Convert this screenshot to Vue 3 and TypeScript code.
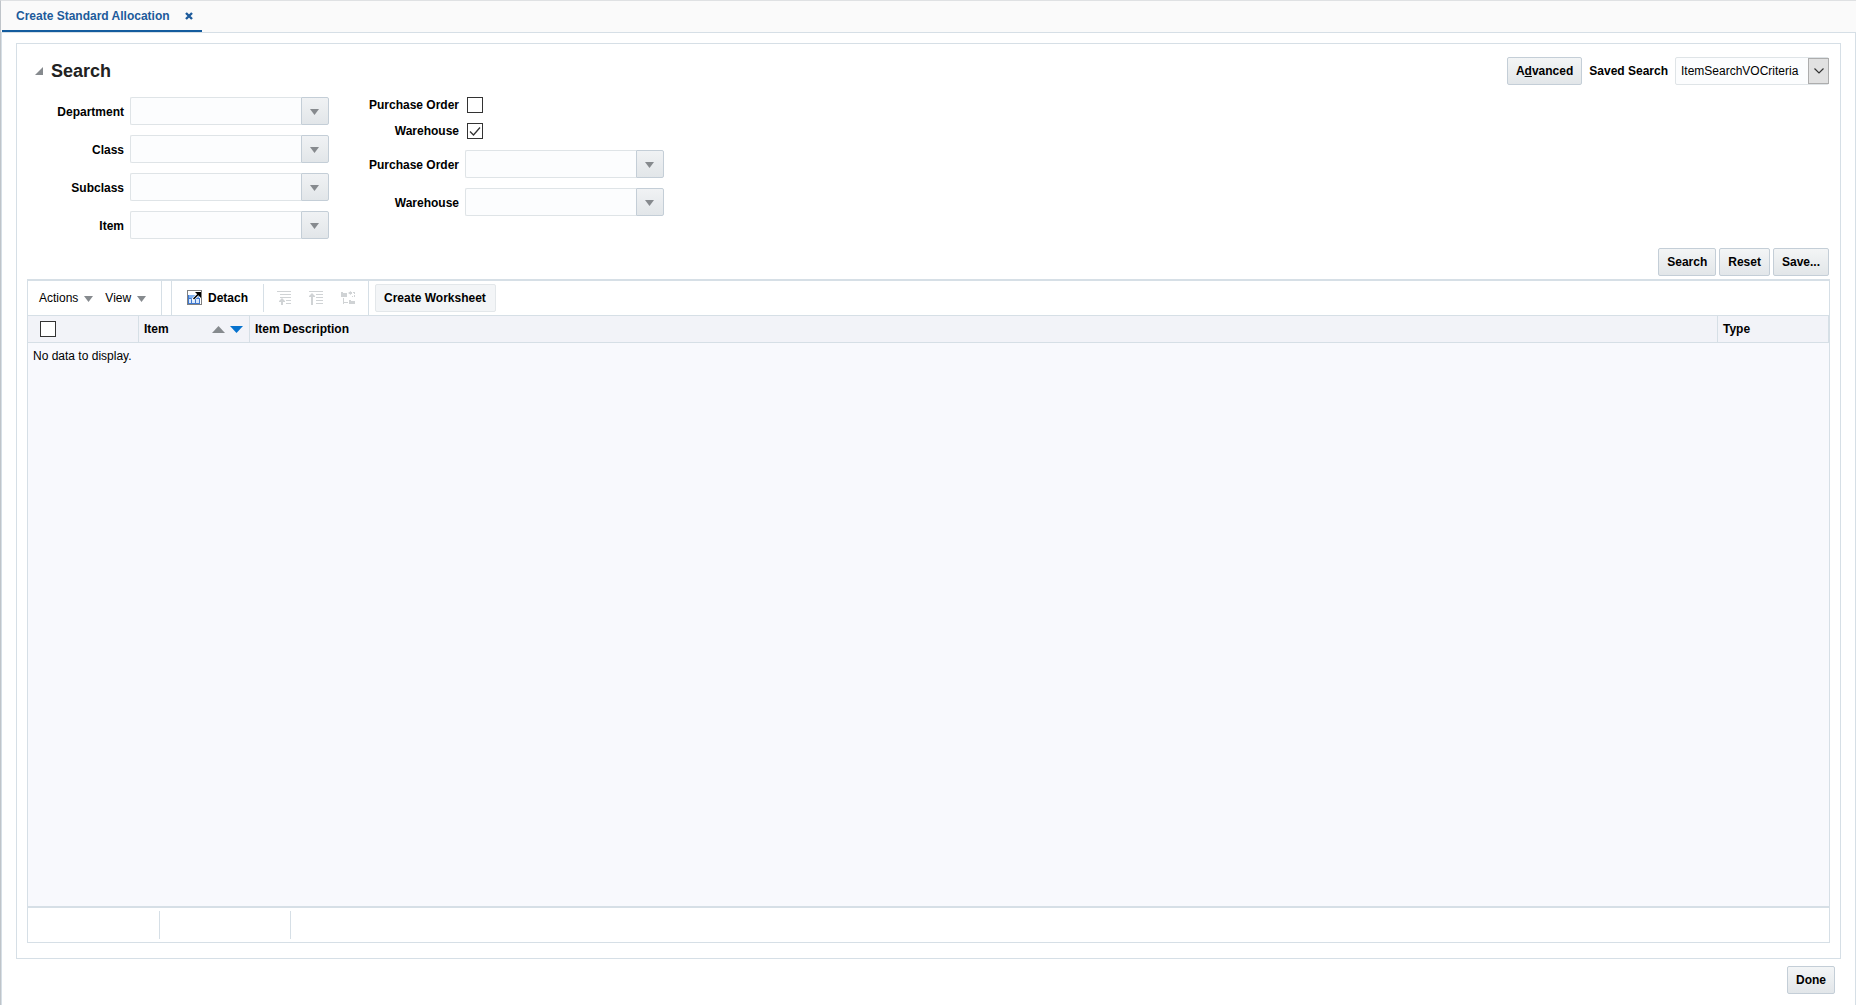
<script setup lang="ts">
import { ref } from 'vue'

interface Field {
  id: string
  label: string
}

const leftFields: Field[] = [
  { id: 'department', label: 'Department' },
  { id: 'class', label: 'Class' },
  { id: 'subclass', label: 'Subclass' },
  { id: 'item', label: 'Item' },
]
const rightFields: Field[] = [
  { id: 'po', label: 'Purchase Order' },
  { id: 'wh', label: 'Warehouse' },
]
const values = ref<Record<string, string>>({})
const usePurchaseOrder = ref(false)
const useWarehouse = ref(true)
const allSelected = ref(false)
const savedSearch = ref('ItemSearchVOCriteria')
</script>

<template>
  <div class="page">
    <nav class="tabs">
      <div class="tab">
        <a href="#" class="tab-link">Create Standard Allocation</a>
        <button type="button" class="tab-close" aria-label="Close tab">
          <svg width="8" height="8" viewBox="0 0 8 8"><path d="M1 1L7 7M7 1L1 7" stroke="#1d5b9b" stroke-width="2.4" /></svg>
        </button>
      </div>
    </nav>

    <main class="content">
      <section class="panel">
        <header class="panel-head">
          <button type="button" class="disclose" aria-label="Collapse search">
            <svg width="8" height="8" viewBox="0 0 8 8"><path d="M8 0V8H0Z" fill="#868a8e" /></svg>
          </button>
          <h1>Search</h1>
          <button type="button" class="btn">A<u>d</u>vanced</button>
          <label class="saved-label" for="saved">Saved Search</label>
          <div class="select-wrap">
            <select id="saved" v-model="savedSearch">
              <option>ItemSearchVOCriteria</option>
            </select>
            <span class="select-arrow">
              <svg width="10" height="6" viewBox="0 0 10 6"><path d="M.5 .5L5 5L9.500 .5" fill="none" stroke="#333" stroke-width="1.200" /></svg>
            </span>
          </div>
        </header>

        <form class="criteria" @submit.prevent>
          <div class="col col-left">
            <div v-for="f in leftFields" :key="f.id" class="field">
              <label :for="f.id">{{ f.label }}</label>
              <div class="combo">
                <input :id="f.id" v-model="values[f.id]" type="text" />
                <button type="button" :aria-label="'Search ' + f.label">
                  <svg width="9" height="6" viewBox="0 0 9 6"><path d="M0 0H9L4.500 6Z" fill="#868a8e" /></svg>
                </button>
              </div>
            </div>
          </div>
          <div class="col col-right">
            <div class="check-row">
              <label for="use-po">Purchase Order</label>
              <input id="use-po" v-model="usePurchaseOrder" type="checkbox" class="check" />
            </div>
            <div class="check-row">
              <label for="use-wh">Warehouse</label>
              <span class="check-wrap">
                <input id="use-wh" v-model="useWarehouse" type="checkbox" class="check" />
                <svg v-if="useWarehouse" class="tick" width="16" height="16" viewBox="0 0 16 16"><path d="M3 8.500L6.500 12L13 4.500" fill="none" stroke="#333" stroke-width="1.300" /></svg>
              </span>
            </div>
            <div v-for="f in rightFields" :key="f.id" class="field">
              <label :for="f.id">{{ f.label }}</label>
              <div class="combo">
                <input :id="f.id" v-model="values[f.id]" type="text" />
                <button type="button" :aria-label="'Search ' + f.label">
                  <svg width="9" height="6" viewBox="0 0 9 6"><path d="M0 0H9L4.500 6Z" fill="#868a8e" /></svg>
                </button>
              </div>
            </div>
          </div>
        </form>

        <div class="search-actions">
          <button type="button" class="btn">Search</button>
          <button type="button" class="btn">Reset</button>
          <button type="button" class="btn">Save...</button>
        </div>

        <div class="grid">
          <div class="toolbar">
            <div class="menus">
              <button type="button" class="menu">Actions
                <svg width="9" height="6" viewBox="0 0 9 6"><path d="M0 0H9L4.500 6Z" fill="#868a8e" /></svg>
              </button>
              <button type="button" class="menu">View
                <svg width="9" height="6" viewBox="0 0 9 6"><path d="M0 0H9L4.500 6Z" fill="#868a8e" /></svg>
              </button>
            </div>
            <button type="button" class="detach">
              <svg width="16" height="16" viewBox="0 0 16 16">
                <rect x=".5" y=".5" width="14" height="14" fill="none" stroke="#000" stroke-dasharray="1 1" />
                <path d="M1 5H12V14H1Z" fill="#d9e8fb" />
                <path d="M1 5H12V8H1Z" fill="#7fb0f0" />
                <path d="M1.500 5V14M4.500 8V14M8.500 8V14M12.500 8V14M1 8.500H13M1 13.500H13" fill="none" stroke="#3f78cf" />
                <path d="M5.500 10L12 3.500" stroke="#fff" stroke-width="3" />
                <path d="M6.500 9L12 3.500" stroke="#000" stroke-width="1.600" />
                <path d="M8 2H14V8L12 6L10 4Z" fill="#000" />
              </svg>
              Detach
            </button>
            <div class="tree-tools">
              <button type="button" disabled aria-label="Go up">
                <svg width="14" height="14" viewBox="0 0 14 14" fill="#d0d3d5">
                  <path d="M0 0H14V1H0ZM3 3H14V4H3ZM3 6H14V7H3ZM9 9H14V10H9ZM9 12H14V13H9ZM4 14V11H2V10L5 7L8 10V11H6V14Z" />
                </svg>
              </button>
              <button type="button" disabled aria-label="Go to top">
                <svg width="14" height="14" viewBox="0 0 14 14" fill="#d0d3d5">
                  <path d="M0 0H14V1H0ZM7 3H14V4H7ZM7 6H14V7H7ZM7 9H14V10H7ZM7 12H14V13H7ZM2 14V6H0V5L3 2L6 5V6H4V14Z" />
                </svg>
              </button>
              <button type="button" disabled aria-label="Show as top">
                <svg width="14" height="14" viewBox="0 0 14 14" fill="#d0d3d5">
                  <path d="M0 1H2V2H6V6H0ZM8 9H10V10H14V13H8ZM2 7H3V11H7V12H3V13H2ZM7 2L10 0V1H11V3H10V4ZM12 1H14V3H13V2H12ZM13 4H14V6H13ZM11 5H12V6H11Z" />
                </svg>
              </button>
            </div>
            <button type="button" class="create">Create Worksheet</button>
          </div>

          <div class="body">
            <table>
              <colgroup><col class="c-fixed" /><col class="c-fixed" /><col /><col class="c-fixed" /></colgroup>
              <thead>
                <tr>
                  <th><input v-model="allSelected" type="checkbox" class="check head-check" aria-label="Select all" /></th>
                  <th>
                    <div class="sortable">
                      <span>Item</span>
                      <button type="button" aria-label="Sort ascending"><svg width="13" height="7" viewBox="0 0 13 7"><path d="M0 7L6.500 0L13 7Z" fill="#868a8e" /></svg></button>
                      <button type="button" aria-label="Sort descending"><svg width="13" height="7" viewBox="0 0 13 7"><path d="M0 0H13L6.500 7Z" fill="#0572ce" /></svg></button>
                    </div>
                  </th>
                  <th>Item Description</th>
                  <th>Type</th>
                </tr>
              </thead>
              <tbody>
                <tr><td colspan="4">No data to display.</td></tr>
              </tbody>
            </table>
          </div>
          <div class="status"><span></span><span></span></div>
        </div>
      </section>
      <footer class="page-foot">
        <button type="button" class="btn">Done</button>
      </footer>
    </main>
  </div>
</template>

<style>
body {
  margin: 0;
  background: #fff;
}
</style>

<style scoped>
* {
  box-sizing: border-box;
}
.page {
  display: flex;
  flex-direction: column;
  min-height: 100vh;
  border-left: 1px solid #bfc4c9;
  border-top: 1px solid #dfe1e3;
  font: 12px/16px "Liberation Sans", Arial, sans-serif;
  color: #000;
}
button,
input,
select {
  font: inherit;
  color: inherit;
  margin: 0;
}
button {
  padding: 0;
  border: 0;
  background: none;
}
svg {
  display: block;
  flex: none;
}
.tabs {
  display: flex;
  height: 31px;
  padding-left: 1px;
  background: #fafafa;
}
.tab {
  display: flex;
  align-items: center;
  gap: 15px;
  padding: 0 9px 0 14px;
  border-bottom: 2px solid #145c9e;
}
.tab-link {
  font-weight: bold;
  color: #1d5b9b;
  text-decoration: none;
}
.content {
  flex: 1;
  display: flex;
  flex-direction: column;
  padding: 10px 14px 11px;
  border: 1px solid #d6dfe6;
  border-bottom: 0;
}
.panel {
  flex: 1;
  display: flex;
  flex-direction: column;
  padding: 13px 10px 15px;
  border: 1px solid #d6dfe6;
}
.panel-head {
  display: flex;
  align-items: center;
  height: 28px;
  padding-left: 8px;
}
.panel-head h1 {
  flex: 1;
  margin: 0 0 0 8px;
  font-size: 18px;
  line-height: 24px;
  color: #222;
}
.btn {
  height: 28px;
  padding: 0 8px;
  border: 1px solid #c4ced7;
  border-radius: 2px;
  background: linear-gradient(#f3f5f6, #e2e6e9);
  font-weight: bold;
}
.saved-label {
  margin: 0 7px;
  font-weight: bold;
}
.select-wrap {
  position: relative;
}
.select-wrap select {
  display: block;
  width: 154px;
  height: 28px;
  padding: 0 24px 0 5px;
  border: 1px solid #dfe4e7;
  border-radius: 2px;
  background: #fcfdfe;
  appearance: none;
}
.select-arrow {
  position: absolute;
  top: 1px;
  right: 0;
  display: flex;
  align-items: center;
  justify-content: center;
  width: 21px;
  height: 26px;
  border: 1px solid #adadad;
  background: #e1e1e1;
  pointer-events: none;
}
.panel-head,
.search-actions {
  padding-right: 1px;
}
.criteria {
  display: flex;
  padding-top: 12px;
}
.col {
  display: flex;
  flex-direction: column;
  gap: 10px;
}
.col label {
  padding-right: 6px;
  font-weight: bold;
  text-align: right;
}
.col .field label {
  padding-top: 1px;
}
.col-left label {
  width: 103px;
}
.col-right label {
  width: 136px;
}
.field,
.check-row {
  display: flex;
  align-items: center;
}
.check-row {
  gap: 2px;
  height: 16px;
}
.check-row + .field {
  margin-top: 1px;
}
.combo {
  display: flex;
  height: 28px;
}
.combo input {
  width: 171px;
  padding: 0 5px;
  border: 1px solid #dfe4e7;
  border-right: 0;
  border-radius: 2px 0 0 2px;
  background: #fcfdfe;
}
.combo button {
  display: flex;
  align-items: center;
  width: 28px;
  padding: 2px 0 0 8px;
  border: 1px solid #c4ced7;
  border-radius: 0 2px 2px 0;
  background: linear-gradient(#f0f2f4, #e2e6e9);
}
.check {
  display: block;
  width: 16px;
  height: 16px;
  border: 1px solid #333;
  background: #fff;
  appearance: none;
}
.check-wrap {
  position: relative;
}
.tick {
  position: absolute;
  inset: 0;
  pointer-events: none;
}
.search-actions {
  display: flex;
  justify-content: flex-end;
  gap: 3px;
  padding-top: 9px;
  padding-bottom: 3px;
}
.grid {
  flex: 1;
  display: flex;
  flex-direction: column;
  border: 1px solid #d6dfe6;
  border-top-width: 2px;
}
.toolbar {
  display: flex;
  align-items: center;
  height: 35px;
  border-bottom: 1px solid #d6dfe6;
}
.menus {
  display: flex;
  align-self: stretch;
  gap: 12px;
  width: 134px;
  padding-left: 11px;
  border-right: 1px solid #d6dfe6;
}
.menu {
  display: flex;
  align-items: center;
  gap: 6px;
}
.menu svg {
  margin-top: 2px;
}
.detach {
  display: flex;
  align-self: stretch;
  align-items: center;
  gap: 5px;
  margin-left: 9px;
  padding: 0 15px;
  border-left: 1px solid #d6dfe6;
  font-weight: bold;
}
.tree-tools {
  display: flex;
  align-self: stretch;
  align-items: center;
  gap: 18px;
  padding: 0 13px;
  border-right: 1px solid #d6dfe6;
}
.tree-tools::before {
  content: "";
  width: 1px;
  height: 28px;
  margin: 0 -5px 0 -13px;
  background: #d6dfe6;
}
.create {
  height: 28px;
  margin-left: 6px;
  padding: 0 9px 0 8px;
  border: 1px solid #e3e7ea;
  border-radius: 2px;
  background: #f3f5f7;
  font-weight: bold;
}
.body {
  flex: 1;
  background: #f8f9fd;
}
table {
  width: 100%;
  table-layout: fixed;
  border-collapse: separate;
  border-spacing: 0;
}
.c-fixed {
  width: 111px;
}
th {
  height: 27px;
  padding: 0 5px;
  border-right: 1px solid #d6dfe6;
  border-bottom: 1px solid #d6dfe6;
  background: #f2f3f8;
  text-align: left;
}
td {
  padding: 5px;
}
.head-check {
  margin-left: 7px;
}
.sortable {
  display: flex;
  align-items: center;
  gap: 5px;
  padding-right: 1px;
}
.sortable span {
  flex: 1;
}
.status {
  display: flex;
  align-items: center;
  height: 36px;
  padding-left: 1px;
  border-top: 2px solid #d6dfe6;
}
.status span {
  width: 131px;
  height: 28px;
  border-right: 1px solid #d6dfe6;
}
.page-foot {
  display: flex;
  justify-content: flex-end;
  padding: 7px 6px 0;
}
</style>
